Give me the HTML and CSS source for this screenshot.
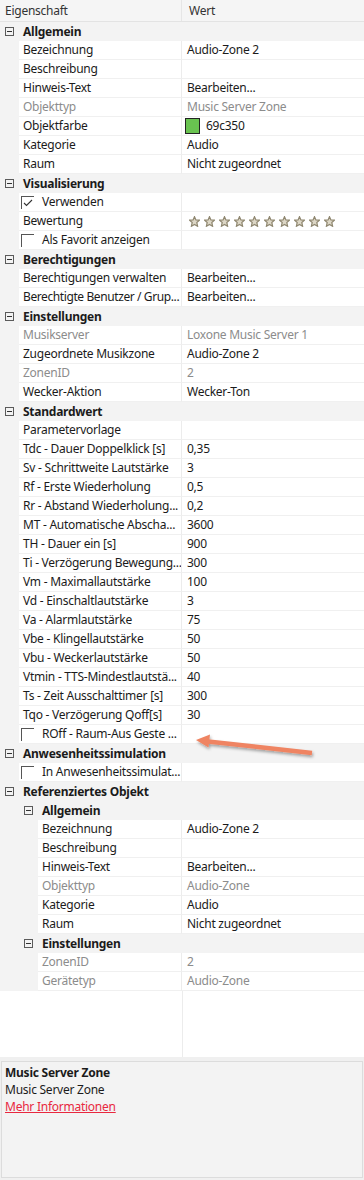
FILE: index.html
```html
<!DOCTYPE html>
<html>
<head>
    <meta charset="UTF-8">
    <meta name="viewport" content="width=device-width, initial-scale=1.0">
    <title>Eigenschaften</title>
    <link rel="stylesheet" href="styles.css">
</head>
<body>
    <div class="page">
        <div class="tree">
            <div class="hdr">
                <div class="hdr-key">Eigenschaft</div>
                <div class="hdr-val">Wert</div>
            </div>

            <!-- Allgemein -->
            <div class="row cat"><div class="key"><span class="tog"></span>Allgemein</div><div class="val"></div></div>
            <div class="row prop"><div class="key"><span class="name">Bezeichnung</span></div><div class="val">Audio-Zone 2</div></div>
            <div class="row prop"><div class="key"><span class="name">Beschreibung</span></div><div class="val"></div></div>
            <div class="row prop"><div class="key"><span class="name">Hinweis-Text</span></div><div class="val">Bearbeiten...</div></div>
            <div class="row prop off"><div class="key"><span class="name">Objekttyp</span></div><div class="val">Music Server Zone</div></div>
            <div class="row prop"><div class="key"><span class="name">Objektfarbe</span></div><div class="val"><span class="swatch"></span>69c350</div></div>
            <div class="row prop"><div class="key"><span class="name">Kategorie</span></div><div class="val">Audio</div></div>
            <div class="row prop"><div class="key"><span class="name">Raum</span></div><div class="val">Nicht zugeordnet</div></div>

            <!-- Visualisierung -->
            <div class="row cat"><div class="key"><span class="tog"></span>Visualisierung</div><div class="val"></div></div>
            <div class="row prop"><div class="key"><span class="name cb"><span class="chk on"><svg width="10" height="8" viewBox="0 0 10 8"><polyline points="1,4 3.5,6.5 9,1" fill="none" stroke="#333" stroke-width="1.1"/></svg></span>Verwenden</span></div><div class="val"></div></div>
            <div class="row prop"><div class="key"><span class="name">Bewertung</span></div><div class="val stars">
                <svg class="star" viewBox="0 0 10 10"><polygon points="5,0.6 6.3,3.6 9.5,3.8 7.1,5.9 7.8,9.3 5,7.6 2.2,9.3 2.9,5.9 0.5,3.8 3.7,3.6"/></svg>
                <svg class="star" viewBox="0 0 10 10"><polygon points="5,0.6 6.3,3.6 9.5,3.8 7.1,5.9 7.8,9.3 5,7.6 2.2,9.3 2.9,5.9 0.5,3.8 3.7,3.6"/></svg>
                <svg class="star" viewBox="0 0 10 10"><polygon points="5,0.6 6.3,3.6 9.5,3.8 7.1,5.9 7.8,9.3 5,7.6 2.2,9.3 2.9,5.9 0.5,3.8 3.7,3.6"/></svg>
                <svg class="star" viewBox="0 0 10 10"><polygon points="5,0.6 6.3,3.6 9.5,3.8 7.1,5.9 7.8,9.3 5,7.6 2.2,9.3 2.9,5.9 0.5,3.8 3.7,3.6"/></svg>
                <svg class="star" viewBox="0 0 10 10"><polygon points="5,0.6 6.3,3.6 9.5,3.8 7.1,5.9 7.8,9.3 5,7.6 2.2,9.3 2.9,5.9 0.5,3.8 3.7,3.6"/></svg>
                <svg class="star" viewBox="0 0 10 10"><polygon points="5,0.6 6.3,3.6 9.5,3.8 7.1,5.9 7.8,9.3 5,7.6 2.2,9.3 2.9,5.9 0.5,3.8 3.7,3.6"/></svg>
                <svg class="star" viewBox="0 0 10 10"><polygon points="5,0.6 6.3,3.6 9.5,3.8 7.1,5.9 7.8,9.3 5,7.6 2.2,9.3 2.9,5.9 0.5,3.8 3.7,3.6"/></svg>
                <svg class="star" viewBox="0 0 10 10"><polygon points="5,0.6 6.3,3.6 9.5,3.8 7.1,5.9 7.8,9.3 5,7.6 2.2,9.3 2.9,5.9 0.5,3.8 3.7,3.6"/></svg>
                <svg class="star" viewBox="0 0 10 10"><polygon points="5,0.6 6.3,3.6 9.5,3.8 7.1,5.9 7.8,9.3 5,7.6 2.2,9.3 2.9,5.9 0.5,3.8 3.7,3.6"/></svg>
                <svg class="star" viewBox="0 0 10 10"><polygon points="5,0.6 6.3,3.6 9.5,3.8 7.1,5.9 7.8,9.3 5,7.6 2.2,9.3 2.9,5.9 0.5,3.8 3.7,3.6"/></svg>
            </div></div>
            <div class="row prop"><div class="key"><span class="name cb"><span class="chk"></span>Als Favorit anzeigen</span></div><div class="val"></div></div>

            <!-- Berechtigungen -->
            <div class="row cat"><div class="key"><span class="tog"></span>Berechtigungen</div><div class="val"></div></div>
            <div class="row prop"><div class="key"><span class="name">Berechtigungen verwalten</span></div><div class="val">Bearbeiten...</div></div>
            <div class="row prop"><div class="key"><span class="name tight">Berechtigte Benutzer / Grup...</span></div><div class="val">Bearbeiten...</div></div>

            <!-- Einstellungen -->
            <div class="row cat"><div class="key"><span class="tog"></span>Einstellungen</div><div class="val"></div></div>
            <div class="row prop off"><div class="key"><span class="name">Musikserver</span></div><div class="val">Loxone Music Server 1</div></div>
            <div class="row prop"><div class="key"><span class="name">Zugeordnete Musikzone</span></div><div class="val">Audio-Zone 2</div></div>
            <div class="row prop off"><div class="key"><span class="name">ZonenID</span></div><div class="val">2</div></div>
            <div class="row prop"><div class="key"><span class="name">Wecker-Aktion</span></div><div class="val">Wecker-Ton</div></div>

            <!-- Standardwert -->
            <div class="row cat"><div class="key"><span class="tog"></span>Standardwert</div><div class="val"></div></div>
            <div class="row prop"><div class="key"><span class="name">Parametervorlage</span></div><div class="val"></div></div>
            <div class="row prop"><div class="key"><span class="name">Tdc - Dauer Doppelklick [s]</span></div><div class="val">0,35</div></div>
            <div class="row prop"><div class="key"><span class="name">Sv - Schrittweite Lautstärke</span></div><div class="val">3</div></div>
            <div class="row prop"><div class="key"><span class="name">Rf - Erste Wiederholung</span></div><div class="val">0,5</div></div>
            <div class="row prop"><div class="key"><span class="name">Rr - Abstand Wiederholung...</span></div><div class="val">0,2</div></div>
            <div class="row prop"><div class="key"><span class="name">MT - Automatische Abscha...</span></div><div class="val">3600</div></div>
            <div class="row prop"><div class="key"><span class="name">TH - Dauer ein [s]</span></div><div class="val">900</div></div>
            <div class="row prop"><div class="key"><span class="name">Ti - Verzögerung Bewegung...</span></div><div class="val">300</div></div>
            <div class="row prop"><div class="key"><span class="name">Vm - Maximallautstärke</span></div><div class="val">100</div></div>
            <div class="row prop"><div class="key"><span class="name">Vd - Einschaltlautstärke</span></div><div class="val">3</div></div>
            <div class="row prop"><div class="key"><span class="name">Va - Alarmlautstärke</span></div><div class="val">75</div></div>
            <div class="row prop"><div class="key"><span class="name">Vbe - Klingellautstärke</span></div><div class="val">50</div></div>
            <div class="row prop"><div class="key"><span class="name">Vbu - Weckerlautstärke</span></div><div class="val">50</div></div>
            <div class="row prop"><div class="key"><span class="name">Vtmin - TTS-Mindestlautstä...</span></div><div class="val">40</div></div>
            <div class="row prop"><div class="key"><span class="name">Ts - Zeit Ausschalttimer [s]</span></div><div class="val">300</div></div>
            <div class="row prop"><div class="key"><span class="name">Tqo - Verzögerung Qoff[s]</span></div><div class="val">30</div></div>
            <div class="row prop"><div class="key"><span class="name cb"><span class="chk"></span>ROff - Raum-Aus Geste ...</span></div><div class="val"></div></div>

            <!-- Anwesenheitssimulation -->
            <div class="row cat"><div class="key"><span class="tog"></span>Anwesenheitssimulation</div><div class="val"></div></div>
            <div class="row prop"><div class="key"><span class="name cb"><span class="chk"></span>In Anwesenheitssimulat...</span></div><div class="val"></div></div>

            <!-- Referenziertes Objekt -->
            <div class="row cat"><div class="key"><span class="tog"></span>Referenziertes Objekt</div><div class="val"></div></div>
            <div class="row cat d2"><div class="key"><span class="tog"></span>Allgemein</div><div class="val"></div></div>
            <div class="row prop d2"><div class="key"><span class="name">Bezeichnung</span></div><div class="val">Audio-Zone 2</div></div>
            <div class="row prop d2"><div class="key"><span class="name">Beschreibung</span></div><div class="val"></div></div>
            <div class="row prop d2"><div class="key"><span class="name">Hinweis-Text</span></div><div class="val">Bearbeiten...</div></div>
            <div class="row prop d2 off"><div class="key"><span class="name">Objekttyp</span></div><div class="val">Audio-Zone</div></div>
            <div class="row prop d2"><div class="key"><span class="name">Kategorie</span></div><div class="val">Audio</div></div>
            <div class="row prop d2"><div class="key"><span class="name">Raum</span></div><div class="val">Nicht zugeordnet</div></div>
            <div class="row cat d2"><div class="key"><span class="tog"></span>Einstellungen</div><div class="val"></div></div>
            <div class="row prop d2 off"><div class="key"><span class="name">ZonenID</span></div><div class="val">2</div></div>
            <div class="row prop d2 off"><div class="key"><span class="name">Gerätetyp</span></div><div class="val">Audio-Zone</div></div>

            <div class="fill"><div class="fill-key"></div><div class="fill-val"></div></div>
        </div>

        <div class="desc">
            <div class="desc-title">Music Server Zone</div>
            <div>Music Server Zone</div>
            <a class="desc-link" href="#">Mehr Informationen</a>
        </div>

        <!-- Markierungspfeil -->
        <svg class="arrow" width="140" height="30" viewBox="0 0 140 30">
            <defs>
                <filter id="sh" x="-10%" y="-50%" width="120%" height="200%">
                    <feDropShadow dx="1" dy="2" stdDeviation="1.5" flood-color="#000" flood-opacity="0.35"/>
                </filter>
            </defs>
            <g filter="url(#sh)">
                <line x1="126" y1="21" x2="22" y2="9.5" stroke="#ef8462" stroke-width="4.5"/>
                <polygon points="10,8 24,2.5 22.5,15.5" fill="#ef8462"/>
            </g>
        </svg>
    </div>
</body>
</html>
```

FILE: styles.css
```css
body {
    margin: 0;
    background: #f0f0f0;
    font-family: 'Segoe UI', 'Noto Sans', sans-serif;
    font-size: 12px;
    letter-spacing: -0.25px;
    color: #1b1b1b;
}

.page {
    position: relative;
    width: 364px;
    height: 1180px;
    display: flex;
    flex-direction: column;
}

.tree {
    height: 1057px;
    display: flex;
    flex-direction: column;
    background: #fff;
}

.hdr {
    display: flex;
    height: 22px;
    box-sizing: border-box;
    background: #f5f5f5;
    border-bottom: 1px solid #e3e3e3;
    line-height: 21px;
    color: #333;
}

.hdr-key {
    width: 182px;
    padding-left: 5px;
    box-sizing: border-box;
    border-right: 1px solid #e6e6e6;
}

.hdr-val {
    padding-left: 7px;
}

.row {
    display: flex;
    height: 19px;
    line-height: 18px;
    background: #f3f3f3;
    white-space: nowrap;
}

.key {
    width: 182px;
    flex-shrink: 0;
    display: flex;
    align-items: center;
    box-sizing: border-box;
    overflow: hidden;
}

.val {
    flex: 1;
    padding-left: 5px;
    overflow: hidden;
}

/* Kategorien */
.cat .key {
    padding-left: 5px;
    font-weight: bold;
}

.cat.d2 .key {
    padding-left: 24px;
}

.tog {
    position: relative;
    width: 9px;
    height: 9px;
    box-sizing: border-box;
    border: 1px solid #5a5a5a;
    margin-right: 9px;
    flex-shrink: 0;
}

.tog::after {
    content: '';
    position: absolute;
    left: 1px;
    right: 1px;
    top: 3px;
    height: 1px;
    background: #333;
}

/* Eigenschaften */
.prop .key {
    padding-left: 19px;
}

.prop.d2 .key {
    padding-left: 38px;
}

.name {
    flex: 1;
    align-self: stretch;
    background: #fff;
    padding-left: 4px;
    border-bottom: 1px solid #f0f0f0;
    border-right: 1px solid #ececec;
    overflow: hidden;
}

.name.tight {
    letter-spacing: -0.4px;
}

.prop .val {
    background: #fff;
    border-bottom: 1px solid #f0f0f0;
}

.off .name,
.off .val {
    color: #8c8c8c;
}

.name.cb {
    display: flex;
    align-items: center;
    padding-left: 2px;
}

.chk {
    width: 13px;
    height: 13px;
    box-sizing: border-box;
    border-left: 1px solid #555;
    border-top: 1px solid #555;
    margin-right: 8px;
    flex-shrink: 0;
    display: flex;
    align-items: center;
    justify-content: center;
}

.swatch {
    display: inline-block;
    vertical-align: top;
    width: 15px;
    height: 16px;
    box-sizing: border-box;
    background: #69c350;
    border: 1px solid #222;
    margin: 1px 6px 0 -2px;
}

.stars {
    display: flex;
    align-items: center;
    gap: 4px;
    padding-left: 7px;
}

.star {
    width: 11px;
    height: 11px;
    fill: #ddd7c6;
    stroke: #8f8770;
    stroke-width: 1.1;
}

.fill {
    flex: 1;
    display: flex;
}

.fill-key {
    width: 182px;
    border-right: 1px solid #ececec;
}

/* Beschreibung */
.desc {
    margin: 4px 1px 0 1px;
    height: 117px;
    box-sizing: border-box;
    background: #f3f3f3;
    border: 1px solid #dcdcdc;
    padding: 2px 3px;
    line-height: 17px;
}

.desc-title {
    font-weight: bold;
}

.desc-link {
    color: #e8283f;
}

.arrow {
    position: absolute;
    left: 186px;
    top: 732px;
}
```
